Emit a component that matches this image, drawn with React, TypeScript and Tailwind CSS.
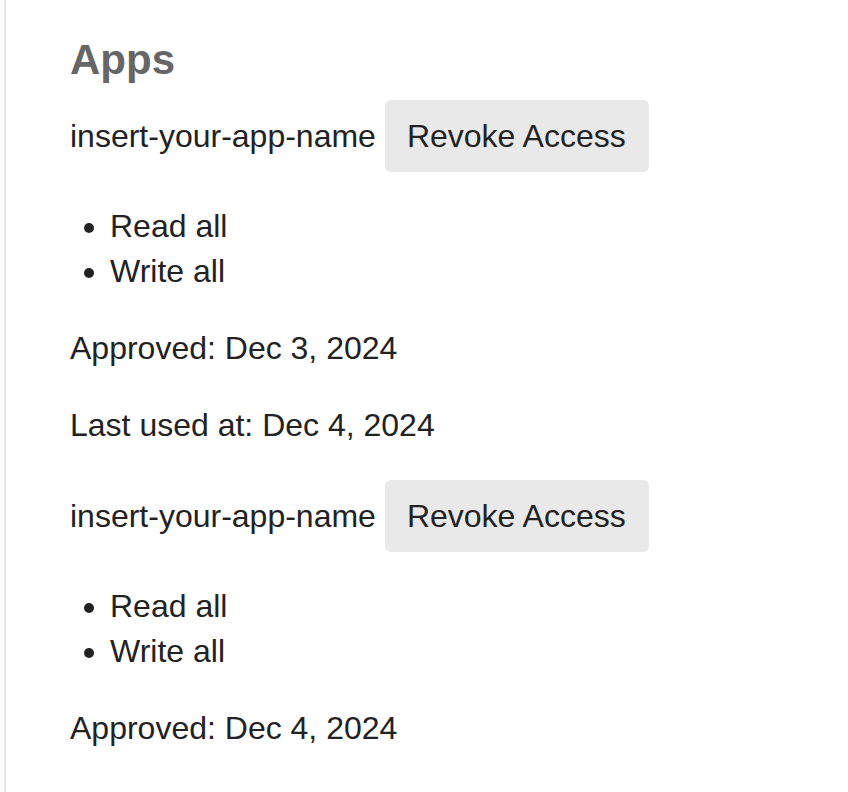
const apps = [
  { name: 'insert-your-app-name', scopes: ['Read all', 'Write all'], approved: 'Dec 3, 2024', lastUsed: 'Dec 4, 2024' },
  { name: 'insert-your-app-name', scopes: ['Read all', 'Write all'], approved: 'Dec 4, 2024', lastUsed: null },
];

const AppEntry = ({ app }: { app: (typeof apps)[number] }) => (
  <div>
    <div className="flex items-center gap-[9px]">
      <span>{app.name}</span>
      <button className="h-[72px] rounded-[6px] bg-[#e9e9e9] pl-[22px] pr-[23px] leading-[40px] text-[#222]">
        Revoke Access
      </button>
    </div>
    <ul className="mt-[32px] list-disc pl-[40px]">
      {app.scopes.map((s, i) => (
        <li key={i}>{s}</li>
      ))}
    </ul>
    <p className="mt-[32px]">Approved: {app.approved}</p>
    {app.lastUsed && <p className="mt-[32px]">Last used at: {app.lastUsed}</p>}
  </div>
);

export default function App() {
  return (
    <div className="min-h-screen bg-white pl-[4px] font-['Liberation_Sans',Arial,sans-serif] text-[32px] leading-[45px] text-[#222]">
      <div className="min-h-screen border-l-2 border-[#e8e8e8] pl-[64px] pt-[31px]">
        <h2 className="mb-[11px] text-[42px] font-bold leading-[58px] text-[#666]">Apps</h2>
        <div className="flex flex-col gap-[32px]">
          {apps.map((a, i) => (
            <AppEntry key={i} app={a} />
          ))}
        </div>
      </div>
    </div>
  );
}
